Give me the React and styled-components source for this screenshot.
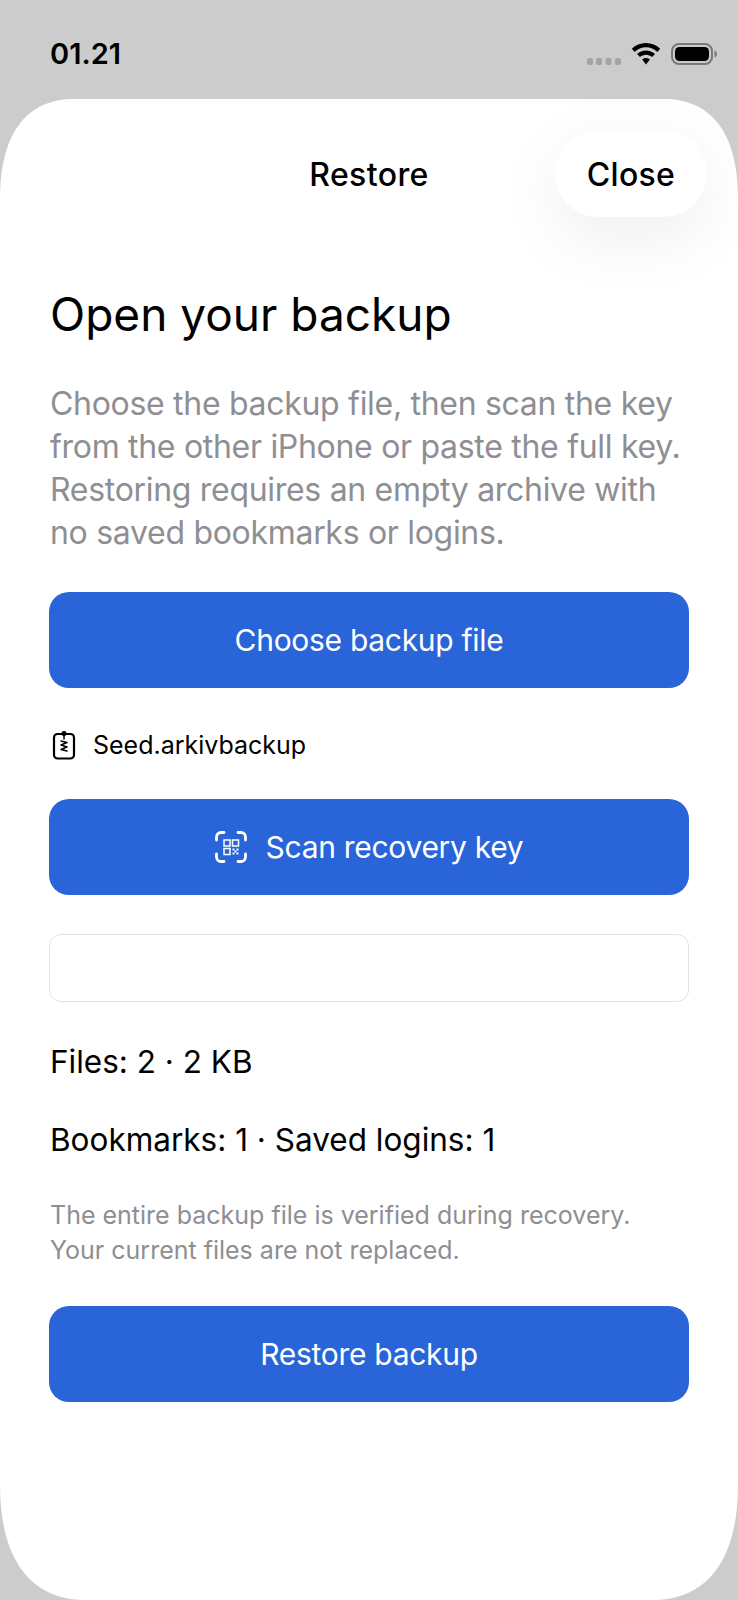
import React from "react";
import styled, { createGlobalStyle } from "styled-components";

const Global = createGlobalStyle`
  html, body { margin: 0; padding: 0; background: #cccccc; }
  * { box-sizing: border-box; }
  body { font-family: Inter, "Liberation Sans", sans-serif; -webkit-font-smoothing: antialiased; }
`;

const Screen = styled.div`
  width: 738px;
  height: 1600px;
  background: #cccccc;
  display: flex;
  flex-direction: column;
  overflow: hidden;
`;

const StatusBar = styled.div`
  height: 99px;
  flex: none;
  padding: 37px 21px 0 50px;
  display: flex;
  justify-content: space-between;
  align-items: flex-start;
`;

const Time = styled.div`
  font-size: 29px;
  line-height: 34px;
  font-weight: 600;
  color: #000;
`;

const StatusIcons = styled.div`
  display: flex;
  align-items: flex-end;
  gap: 10px;
  padding-top: 6px;
`;

const Sheet = styled.div`
  flex: 1;
  background: #fff;
  clip-path: path("M0 100C0 30 30 0 74 0H664C708 0 738 30 738 100V1386C738 1466 703 1501 653 1501H85C35 1501 0 1466 0 1386Z");
  padding: 32px 49px 0;
  display: flex;
  flex-direction: column;
`;

const NavBar = styled.div`
  height: 86px;
  display: flex;
  align-items: center;
  justify-content: center;
  position: relative;
`;

const NavTitle = styled.div`
  font-size: 32px;
  font-weight: 550;
  letter-spacing: 0.4px;
  color: #000;
`;

const CloseButton = styled.button`
  position: absolute;
  right: -18px;
  top: 0;
  width: 152px;
  height: 86px;
  border: 0;
  border-radius: 43px;
  background: #fff;
  font: 550 32px Inter, sans-serif;
  letter-spacing: 0.3px;
  color: #000;
  box-shadow: 0 20px 70px rgba(0, 0, 0, 0.07);
`;

const Heading = styled.h1`
  margin: 69px 0 0 1px;
  font-size: 46px;
  line-height: 56px;
  font-weight: 400;
  color: #000;
`;

const Lead = styled.p`
  margin: 40px 0 0 1px;
  font-size: 32px;
  line-height: 43px;
  letter-spacing: -0.3px;
  color: #8e8e93;
`;

const PrimaryButton = styled.button`
  margin-top: ${(p) => p.$top}px;
  height: 96px;
  width: 100%;
  flex: none;
  border: 0;
  border-radius: 20px;
  background: #2964d9;
  color: #fff;
  font: 400 30px Inter, sans-serif;
  letter-spacing: -0.3px;
  display: flex;
  align-items: center;
  justify-content: center;
  gap: 19px;
`;

const FileRow = styled.div`
  margin-top: 40px;
  height: 34px;
  padding-left: 3px;
  display: flex;
  align-items: center;
  gap: 17px;
  font-size: 25px;
  color: #000;
`;

const KeyInput = styled.div`
  margin-top: 39px;
  height: 68px;
  flex: none;
  border: 1.5px solid #e2e2e4;
  border-radius: 12px;
  background: #fff;
`;

const Stat = styled.div`
  margin: ${(p) => p.$top}px 0 0 1px;
  font-size: 31.5px;
  line-height: 40px;
  color: #000;
`;

const Note = styled.p`
  margin: 38px 0 0 1px;
  font-size: 25px;
  line-height: 35px;
  color: #8e8e93;
`;

const Wifi = () => (
  <svg width="30" height="22" viewBox="0 0 30 22">
    <path d="M15 0C9.400 0 4.500 2.200 .8 5.800L3.700 8.900C6.600 6.100 10.600 4.300 15 4.300S23.400 6.100 26.300 8.900L29.200 5.800C25.500 2.200 20.600 0 15 0Z" />
    <path d="M15 7.400C11.500 7.400 8.400 8.800 6 11L9 14.100C10.600 12.700 12.700 11.800 15 11.800S19.400 12.700 21 14.100L24 11C21.600 8.800 18.500 7.400 15 7.400Z" />
    <path d="M15 15C13.500 15 12.200 15.500 11.200 16.500L15 21.500L18.800 16.500C17.800 15.500 16.500 15 15 15Z" />
  </svg>
);

const Signal = () => (
  <svg width="34" height="7" viewBox="0 0 34 7" fill="#a3a3a3">
    <rect x="0" y="0" width="6" height="7" rx="2" />
    <rect x="9" y="0" width="6" height="7" rx="2" />
    <rect x="18.500" y="0" width="6" height="7" rx="2" />
    <rect x="28" y="0" width="6" height="7" rx="2" />
  </svg>
);

const Battery = () => (
  <svg width="46" height="22" viewBox="0 0 46 22">
    <rect x="1" y="1" width="40" height="20" rx="7" fill="none" stroke="#7a7a7a" strokeWidth="2" />
    <rect x="4" y="4" width="34" height="14" rx="4.500" fill="#000" />
    <path d="M43.500 7.500C45 8 46 9.300 46 11S45 14 43.500 14.500Z" fill="#7a7a7a" />
  </svg>
);

const ClipboardIcon = () => (
  <svg width="24" height="30" viewBox="0 0 24 30" fill="none" stroke="#000">
    <rect x="2" y="4" width="20" height="24.500" rx="3.500" strokeWidth="2.200" />
    <circle cx="12" cy="3.500" r="2.500" fill="#000" stroke="none" />
    <path d="M12 6V9M9 11L15 12.500L9 15L15 17L9 19.500L15 21" strokeWidth="1.500" strokeLinecap="round" strokeLinejoin="round" />
  </svg>
);

const ScanIcon = () => (
  <svg width="32" height="32" viewBox="0 0 32 32" fill="none" stroke="#fff">
    <path d="M1.500 9V6A4.500 4.500 0 0 1 6 1.500H9M23 1.500H26A4.500 4.500 0 0 1 30.500 6V9M30.500 23V26A4.500 4.500 0 0 1 26 30.500H23M9 30.500H6A4.500 4.500 0 0 1 1.500 26V23" strokeWidth="2.800" strokeLinecap="round" />
    <rect x="9" y="9" width="6" height="6" strokeWidth="1.500" />
    <rect x="17.500" y="9" width="6" height="6" strokeWidth="1.500" />
    <rect x="9" y="17.500" width="6" height="6" strokeWidth="1.500" />
    <path d="M17.500 17.500H19.500V19.500H17.500ZM21.500 17.500H23.500V19.500H21.500ZM19.500 19.500H21.500V21.500H19.500ZM17.500 21.500H19.500V23.500H17.500ZM21.500 21.500H23.500V23.500H21.500Z" fill="#fff" stroke="none" />
  </svg>
);

export default function App() {
  return (
    <>
      <Global />
      <Screen>
        <StatusBar>
          <Time>01.21</Time>
          <StatusIcons>
            <Signal />
            <Wifi />
            <Battery />
          </StatusIcons>
        </StatusBar>
        <Sheet>
          <NavBar>
            <NavTitle>Restore</NavTitle>
            <CloseButton>Close</CloseButton>
          </NavBar>
          <Heading>Open your backup</Heading>
          <Lead>
            Choose the backup file, then scan the key from the other iPhone or paste the full key. Restoring requires an empty archive with no saved bookmarks or logins.
          </Lead>
          <PrimaryButton $top={38}>Choose backup file</PrimaryButton>
          <FileRow>
            <ClipboardIcon />
            Seed.arkivbackup
          </FileRow>
          <PrimaryButton $top={37}>
            <ScanIcon />
            Scan recovery key
          </PrimaryButton>
          <KeyInput />
          <Stat $top={40}>Files: 2 · 2 KB</Stat>
          <Stat $top={38}>Bookmarks: 1 · Saved logins: 1</Stat>
          <Note>
            The entire backup file is verified during recovery.
            <br />
            Your current files are not replaced.
          </Note>
          <PrimaryButton $top={38}>Restore backup</PrimaryButton>
        </Sheet>
      </Screen>
    </>
  );
}
